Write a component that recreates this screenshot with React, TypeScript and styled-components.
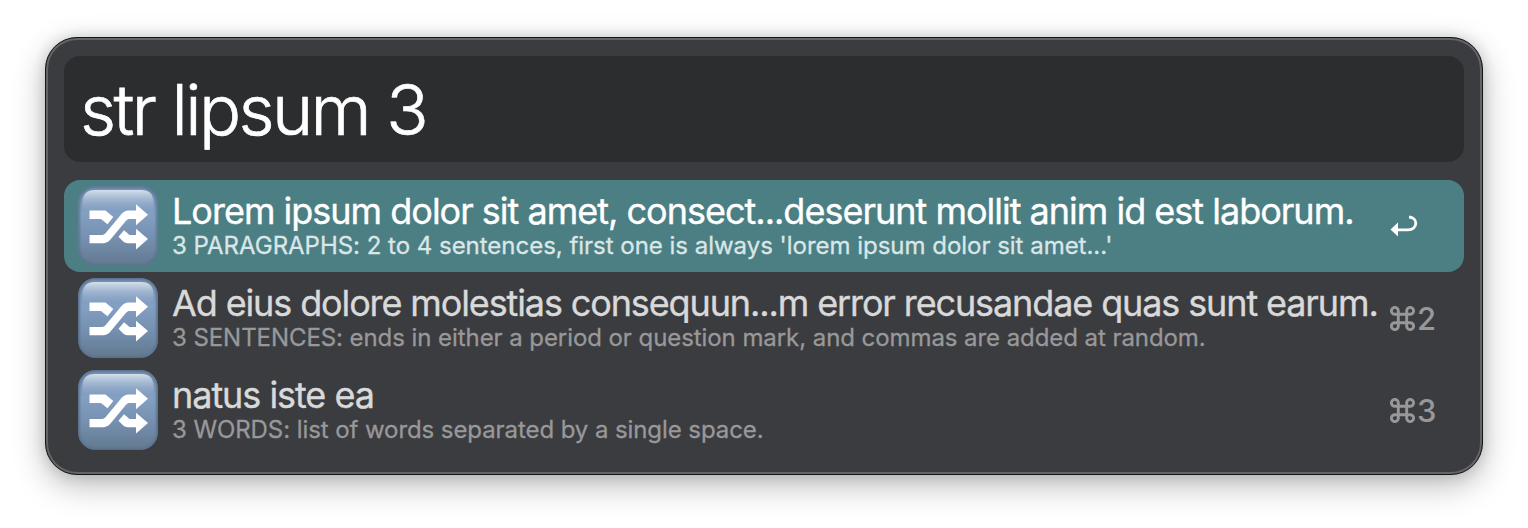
import React, { useId } from "react";
import styled, { createGlobalStyle } from "styled-components";

const GlobalStyle = createGlobalStyle`
  * { box-sizing: border-box; }
  body {
    margin: 0;
    background: #fff;
    font-family: Inter, "Liberation Sans", sans-serif;
    overflow: hidden;
  }
`;

const Desktop = styled.main`
  width: 1528px;
  height: 528px;
  padding: 37px 45px 53px;
`;

const Launcher = styled.section`
  height: 438px;
  padding: 18px;
  border: 1px solid #141516;
  border-radius: 32px;
  background: #3b3c3f;
  box-shadow: inset 0 0 0 2px #636567, 0 10px 32px rgba(0, 0, 0, 0.28), 0 0 14px rgba(0, 0, 0, 0.14);
  display: flex;
  flex-direction: column;
  gap: 18px;
`;

const SearchField = styled.div`
  height: 106px;
  padding: 0 16px;
  border-radius: 16px;
  background: #2c2d2f;
  color: #fff;
  font-size: 70px;
  font-weight: 300;
  -webkit-text-stroke: 0.7px currentColor;
  letter-spacing: -2.6px;
  line-height: 107px;
  white-space: pre;
`;

const Results = styled.ul`
  margin: 0;
  padding: 0;
  list-style: none;
`;

const Row = styled.li<{ $selected?: boolean }>`
  height: 92px;
  padding-left: 14px;
  display: flex;
  border-radius: 16px;
  background: ${(p) => (p.$selected ? "#4b7f84" : "transparent")};
  color: ${(p) => (p.$selected ? "#fff" : "#d9d9da")};
`;

const IconSlot = styled.div`
  width: 80px;
  height: 80px;
  margin-top: 6px;
  flex: none;
  svg { display: block; }
`;

const Texts = styled.div`
  flex: 1;
  min-width: 0;
  padding: 11px 0 0 14px;
  white-space: nowrap;
`;

const Title = styled.div<{ $tracking: number }>`
  font-size: 36px;
  -webkit-text-stroke: 0.35px currentColor;
  line-height: 40px;
  letter-spacing: ${(p) => p.$tracking}px;
`;

const Subtitle = styled.div<{ $selected?: boolean; $tracking: number }>`
  font-size: 24px;
  -webkit-text-stroke: 0.3px currentColor;
  line-height: 30px;
  letter-spacing: ${(p) => p.$tracking}px;
  color: ${(p) => (p.$selected ? "#dbe6e7" : "#98989a")};
`;

const Shortcut = styled.div`
  flex: none;
  width: 74px;
  display: flex;
  align-items: center;
  gap: 2px;
  color: #98989a;
  font-size: 31px;
  font-weight: 500;
  svg { display: block; }
`;

function ShuffleIcon() {
  const id = useId();
  return (
    <svg width="80" height="80" viewBox="0 0 80 80">
      <defs>
        <linearGradient id={id + "f"} x1="0" y1="0" x2="0" y2="1">
          <stop offset="0" stopColor="#7590b2" />
          <stop offset="0.35" stopColor="#839fc2" />
          <stop offset="0.65" stopColor="#7590b0" />
          <stop offset="1" stopColor="#62788f" />
        </linearGradient>
        <linearGradient id={id + "g"} x1="0" y1="0" x2="0" y2="1">
          <stop offset="0" stopColor="#d4e0ec" stopOpacity="1" />
          <stop offset="1" stopColor="#a9bfd9" stopOpacity="0" />
        </linearGradient>
        <filter id={id + "b"} x="-10%" y="-10%" width="120%" height="120%">
          <feGaussianBlur stdDeviation="1.1" />
        </filter>
        <filter id={id + "s"} x="-10%" y="-10%" width="120%" height="120%">
          <feGaussianBlur stdDeviation="0.7" />
        </filter>
        <clipPath id={id + "c"}>
          <rect x="0.3" y="0.3" width="79.4" height="79.4" rx="17" />
        </clipPath>
      </defs>
      <g clipPath={`url(#${id}c)`}>
        <rect width="80" height="80" fill={`url(#${id}f)`} />
        <rect x="0.3" y="0.3" width="79.4" height="79.4" rx="17" fill="none" stroke="#5a718e" strokeWidth="3" filter={`url(#${id}b)`} />
        <path d="M4.500 25V17Q4.500 4 17 4H63Q75.500 4 75.500 17V25Z" fill={`url(#${id}g)`} filter={`url(#${id}s)`} />
      </g>
      <g fill="#fff">
        <path d="M11.500 24.500H27.500L35.300 31L29.500 38.200L23 33H11.500Z" />
        <path d="M11.500 49H24Q26 49 27.500 47.200L43.500 28Q46.500 24.500 50.500 24.500H58V18.300L70 28.700L58 39.300V33H51Q49.500 33 48 34.800L32.500 53.500Q29.200 57.300 25 57.300H11.500Z" />
        <path d="M46 44.200L51.500 49H58V42.700L70 53L58 63.500V57.300H49.500Q47 57.300 45.200 55.500L40.500 50.800Z" />
      </g>
    </svg>
  );
}

function ReturnIcon() {
  return (
    <svg width="28" height="22" viewBox="0 0 28 22">
      <path d="M7 14.800H18C22.800 14.800 25.800 12 25.800 8.300C25.800 4.800 23.200 2.200 19 2" fill="none" stroke="#fff" strokeWidth="2.800" />
      <path d="M0.500 14.500L8 7.500V21.500Z" fill="#fff" />
    </svg>
  );
}

function CommandIcon() {
  return (
    <svg width="25" height="25" viewBox="0 0 25 25" fill="none" stroke="currentColor" strokeWidth="2.900">
      <path d="M8.300 8.300H16.700V16.700H8.300ZM8.300 8.300H5A3.450 3.450 0 1 1 8.300 5ZM16.700 8.300V5A3.450 3.450 0 1 1 20 8.300ZM16.700 16.700H20A3.450 3.450 0 1 1 16.700 20ZM8.300 16.700V20A3.450 3.450 0 1 1 5 16.700Z" />
    </svg>
  );
}

const results = [
  {
    title: "Lorem ipsum dolor sit amet, consect...deserunt mollit anim id est laborum.",
    subtitle: "3 PARAGRAPHS: 2 to 4 sentences, first one is always 'lorem ipsum dolor sit amet...'",
    titleTracking: -1,
    subtitleTracking: -0.02,
  },
  {
    title: "Ad eius dolore molestias consequun...m error recusandae quas sunt earum.",
    subtitle: "3 SENTENCES: ends in either a period or question mark, and commas are added at random.",
    titleTracking: -1.12,
    subtitleTracking: -0.07,
    key: "2",
  },
  {
    title: "natus iste ea",
    subtitle: "3 WORDS: list of words separated by a single space.",
    titleTracking: -1.05,
    subtitleTracking: -0.08,
    key: "3",
  },
];

export default function App() {
  return (
    <>
      <GlobalStyle />
      <Desktop>
        <Launcher>
          <SearchField>str lipsum 3</SearchField>
          <Results>
            {results.map((r) => (
              <Row key={r.title} $selected={!r.key}>
                <IconSlot>
                  <ShuffleIcon />
                </IconSlot>
                <Texts>
                  <Title $tracking={r.titleTracking}>{r.title}</Title>
                  <Subtitle $selected={!r.key} $tracking={r.subtitleTracking}>
                    {r.subtitle}
                  </Subtitle>
                </Texts>
                <Shortcut>
                  {r.key ? (
                    <>
                      <CommandIcon />
                      {r.key}
                    </>
                  ) : (
                    <ReturnIcon />
                  )}
                </Shortcut>
              </Row>
            ))}
          </Results>
        </Launcher>
      </Desktop>
    </>
  );
}
